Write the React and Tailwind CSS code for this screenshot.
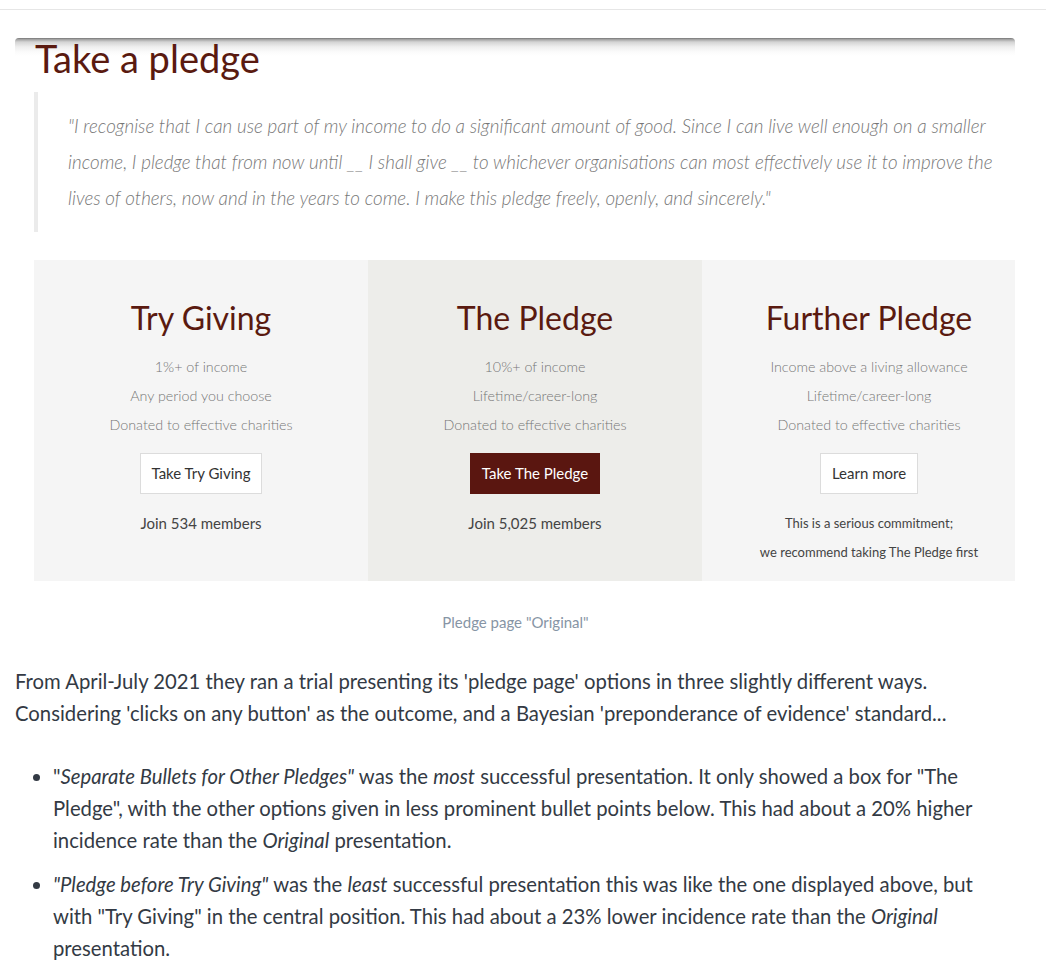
export default function App() {
  const sans = { fontFamily: "Lato, 'Noto Sans', sans-serif" };
  return (
    <div className="w-[1046px] min-h-[978px] bg-white text-[#333]" style={sans}>
      <div className="h-[10px] border-b border-[#e6e6e6]" />
      <div className="pt-[28px] px-[15px] w-[1031px]">
        {/* image panel */}
        <div className="w-[1000px] rounded-t-[4px] bg-[linear-gradient(to_bottom,#6f6f6f_0px,#9a9a9a_1px,#d4d4d4_4px,#efefef_9px,#fbfbfb_14px,#ffffff_18px)]">
          <h1 className="pl-[20px] text-[38px] leading-[40px] text-[#5a1a10]">Take a pledge</h1>
          <div className="ml-[19px] mt-[14px] border-l-[4px] border-[#ebebeb] pl-[30px] pr-[10px] py-[16px]">
            <p className="text-[18.8px] leading-[36px] italic font-light text-[#777]">
              "I recognise that I can use part of my income to do a significant amount of good. Since I can live well enough on a smaller income, I pledge that from now until __ I shall give __ to whichever organisations can most effectively use it to improve the lives of others, now and in the years to come. I make this pledge freely, openly, and sincerely."
            </p>
          </div>
          <div className="ml-[19px] mt-[28px] flex h-[321px] w-[981px] overflow-hidden">
            <Card bg="bg-[#f5f5f5]" title="Try Giving" lines={["1%+ of income", "Any period you choose", "Donated to effective charities"]} btn="Take Try Giving" primary={false} foot={["Join 534 members"]} />
            <Card bg="bg-[#ededea]" title="The Pledge" lines={["10%+ of income", "Lifetime/career-long", "Donated to effective charities"]} btn="Take The Pledge" primary foot={["Join 5,025 members"]} />
            <Card bg="bg-[#f5f5f5]" title="Further Pledge" lines={["Income above a living allowance", "Lifetime/career-long", "Donated to effective charities"]} btn="Learn more" primary={false} foot={["This is a serious commitment;", "we recommend taking The Pledge first"]} small />
          </div>
        </div>
        <p className="mt-[30px] text-center text-[15px] text-[#8795a5]">Pledge page "Original"</p>
      </div>
      <div className="pl-[15px] pr-[40px] mt-[31px] text-[20.3px] leading-[32px] text-[#333a44]">
        <p>
          From April-July 2021 they ran a trial presenting its 'pledge page' options in three slightly different ways. Considering 'clicks on any button' as the outcome, and a Bayesian 'preponderance of evidence' standard...
        </p>
        <ul className="mt-[31px] pl-[38px] list-disc">
          <li>
            "<em>Separate Bullets for Other Pledges"</em> was the <em>most</em> successful presentation. It only showed a box for "The Pledge", with the other options given in less prominent bullet points below. This had about a 20% higher incidence rate than the <em>Original</em> presentation.
          </li>
          <li className="mt-[12px]">
            <em>"Pledge before Try Giving"</em> was the <em>least</em> successful presentation this was like the one displayed above, but with "Try Giving" in the central position. This had about a 23% lower incidence rate than the <em>Original</em> presentation.
          </li>
        </ul>
      </div>
    </div>
  );
}

function Card({ bg, title, lines, btn, primary, foot, small }) {
  return (
    <div className={`${bg} w-[334px] shrink-0 flex flex-col items-center pt-[38px]`}>
      <h2 className="text-[32px] leading-[40px] text-[#5a1a10]">{title}</h2>
      <div className="mt-[14px] flex flex-col items-center">
        {lines.map((l) => (
          <div key={l} className="text-[14.3px] leading-[29px] font-light text-[#777]">{l}</div>
        ))}
      </div>
      <button
        className={`mt-[14px] h-[41px] px-[11px] text-[15px] ${primary ? "bg-[#5a1610] text-white border border-[#5a1610]" : "bg-white text-[#333] border border-[#dcdcdc]"}`}
      >
        {btn}
      </button>
      <div className="mt-[15px] flex flex-col items-center">
        {foot.map((f) => (
          <div key={f} className={`${small ? "text-[13px] leading-[29px]" : "text-[15px] leading-[29px]"} text-[#444]`}>{f}</div>
        ))}
      </div>
    </div>
  );
}
